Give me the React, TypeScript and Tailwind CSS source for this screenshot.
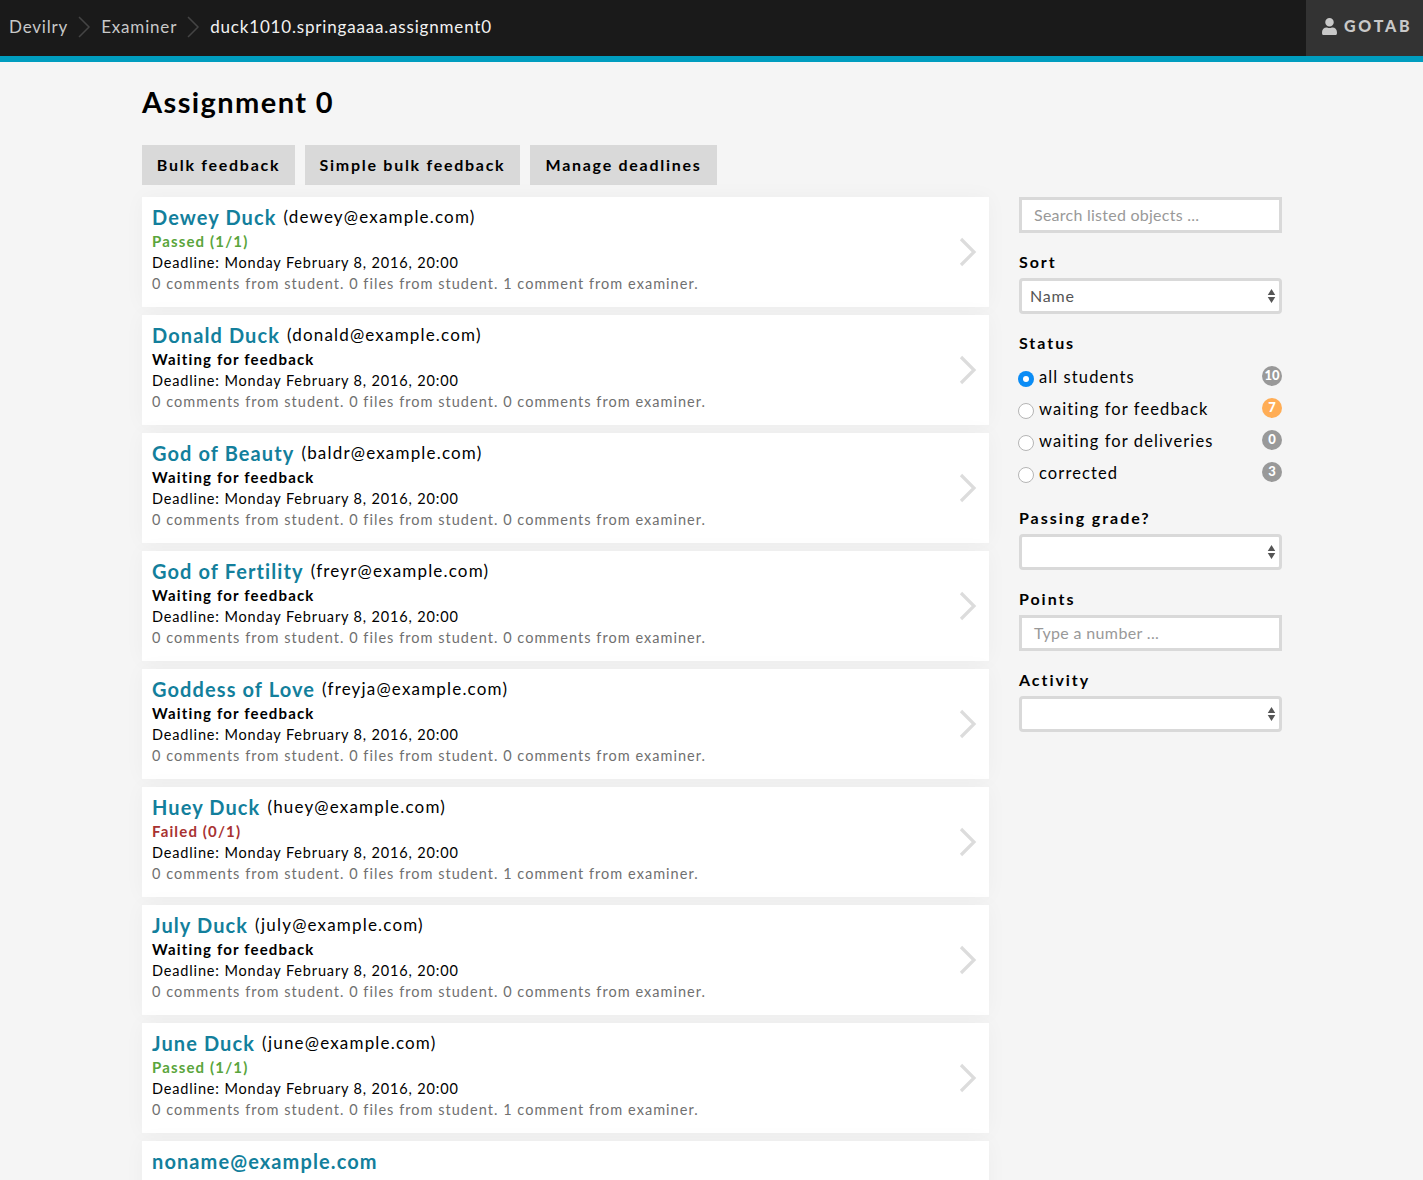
import React from "react";
import { FaUser } from "react-icons/fa";

type Card = { name?: string; email: string; status: string; comments: string };
const Z = "0 comments from student. 0 files from student. 0 comments from examiner.";
const O = "0 comments from student. 0 files from student. 1 comment from examiner.";
const W = "Waiting for feedback";
const cards: Card[] = [
  { name: "Dewey Duck", email: "dewey@example.com", status: "Passed (1/1)", comments: O },
  { name: "Donald Duck", email: "donald@example.com", status: W, comments: Z },
  { name: "God of Beauty", email: "baldr@example.com", status: W, comments: Z },
  { name: "God of Fertility", email: "freyr@example.com", status: W, comments: Z },
  { name: "Goddess of Love", email: "freyja@example.com", status: W, comments: Z },
  { name: "Huey Duck", email: "huey@example.com", status: "Failed (0/1)", comments: O },
  { name: "July Duck", email: "july@example.com", status: W, comments: Z },
  { name: "June Duck", email: "june@example.com", status: "Passed (1/1)", comments: O },
  { email: "noname@example.com", status: W, comments: Z },
];

function statusClass(s: string) {
  if (s.startsWith("Passed")) return "text-[#5aa53c]";
  if (s.startsWith("Failed")) return "text-[#a83232]";
  return "text-black";
}

function Crumb() {
  return (
    <svg width="14" height="22" viewBox="0 0 14 22" className="mr-[10px] ml-[9px] shrink-0">
      <path d="M2 1l10 10L2 21" fill="none" stroke="#444" strokeWidth="1.5" />
    </svg>
  );
}

function Row({ c }: { c: Card }) {
  return (
    <div className="flex h-[110px] shrink-0 items-start justify-between bg-white pt-[6px] pl-[10px] pr-[12px] shadow-[0_0_20px_rgba(0,0,0,0.035)]">
      <div className="flex flex-col">
        <div className="flex h-[28px] items-center">
          <span className="text-[20px] font-bold tracking-[1.1px] text-[#137f9c]">{c.name ?? c.email}</span>
          {c.name && <span className="ml-[7px] text-[17px] tracking-[1.18px] text-black">({c.email})</span>}
        </div>
        {c.name && (
          <>
            <div className={`h-[21px] text-[15px] leading-[21px] font-bold tracking-[1.15px] ${statusClass(c.status)}`}>{c.status}</div>
            <div className="h-[21px] text-[14.5px] leading-[21px] tracking-[0.85px] text-black">Deadline: Monday February 8, 2016, 20:00</div>
            <div className="h-[21px] text-[14.5px] leading-[21px] tracking-[1.03px] text-[#707070]">{c.comments}</div>
          </>
        )}
      </div>
      <svg width="18" height="30" viewBox="0 0 18 30" className="mt-[34px] shrink-0">
        <path d="M2 2l13 13L2 28" fill="none" stroke="#dcdcdc" strokeWidth="3.2" />
      </svg>
    </div>
  );
}

function SelectBox({ value }: { value?: string }) {
  return (
    <div className="flex h-[36px] items-center justify-between rounded-[4px] border-[3px] border-[#d9d9d9] bg-white pl-[8px] pr-[3px] text-[16px] tracking-[0.8px] text-[#555]">
      <span>{value}</span>
      <svg width="9" height="16" viewBox="0 0 9 16">
        <path d="M4.5 1L8.25 7H.75zM4.5 15L.75 9h7.5z" fill="#555" />
      </svg>
    </div>
  );
}

function Label({ children }: { children: React.ReactNode }) {
  return <div className="h-[22px] text-[16px] leading-[22px] font-bold tracking-[1.95px] text-black">{children}</div>;
}

function Radio({ label, count, active, badge }: { label: string; count: string; active?: boolean; badge: string }) {
  return (
    <div className="flex h-[32px] items-center justify-between">
      <div className="flex items-center">
        {active ? (
          <span className="mt-[3px] -ml-[1px] flex h-[16px] w-[16px] items-center justify-center rounded-full bg-[#0a8cf5]">
            <span className="h-[6px] w-[6px] rounded-full bg-white" />
          </span>
        ) : (
          <span className="mt-[3px] -ml-[1px] h-[16px] w-[16px] rounded-full border border-[#b5b5b5] bg-white" />
        )}
        <span className="ml-[5px] text-[16.5px] tracking-[1.1px] text-black">{label}</span>
      </div>
      <span className={`mb-[2px] flex h-[20px] w-[20px] items-center justify-center overflow-hidden rounded-full text-[13px] font-black text-white ${badge}`}>{count}</span>
    </div>
  );
}

export default function App() {
  return (
    <div className="h-[1180px] overflow-hidden bg-[#f5f5f5] font-['Lato',sans-serif]">
      <header className="flex h-[62px] items-stretch justify-between border-b-[6px] border-[#009dbf] bg-[#1a1a1a]">
        <nav className="flex items-center pb-[2px] pl-[9px] text-[17px] tracking-[0.82px] text-[#c8c8c8]">
          <span>Devilry</span>
          <Crumb />
          <span>Examiner</span>
          <Crumb />
          <span className="text-[#f2f2f2]">duck1010.springaaaa.assignment0</span>
        </nav>
        <div className="flex w-[117px] items-center bg-[#333] pb-[4px] pl-[16px] text-[#c8c8c8]">
          <FaUser size={17} className="-ml-[1px]" />
          <span className="ml-[6px] text-[16px] font-black tracking-[2.75px]">GOTAB</span>
        </div>
      </header>
      <main className="pl-[142px]">
        <h1 className="mb-[4px] flex h-[79px] items-center text-[29px] font-bold tracking-[1.4px] text-black">Assignment 0</h1>
        <div className="flex gap-[10px]">
          {[["Bulk feedback", "w-[153px]"], ["Simple bulk feedback", "w-[215px]"], ["Manage deadlines", "w-[187px]"]].map(([t, w]) => (
            <div key={t} className={`flex h-[40px] items-center justify-center bg-[#d9d9d9] text-[16px] font-bold tracking-[1.72px] text-black ${w}`}>{t}</div>
          ))}
        </div>
        <div className="mt-[12px] flex items-start gap-[30px]">
          <div className="flex w-[847px] flex-col gap-[8px]">
            {cards.map((c) => <Row key={c.email} c={c} />)}
          </div>
          <aside className="w-[263px]">
            <div className="flex h-[36px] items-center border-[3px] border-[#d9d9d9] bg-white pl-[12px] text-[16px] tracking-[0.25px] text-[#999]">Search listed objects ...</div>
            <div className="mt-[18px] mb-[5px]"><Label>Sort</Label></div>
            <SelectBox value="Name" />
            <div className="mt-[18px] mb-[7px]"><Label>Status</Label></div>
            <Radio label="all students" count="10" active badge="bg-[#999]" />
            <Radio label="waiting for feedback" count="7" badge="bg-[#ffad55]" />
            <Radio label="waiting for deliveries" count="0" badge="bg-[#999]" />
            <Radio label="corrected" count="3" badge="bg-[#999]" />
            <div className="mt-[18px] mb-[5px]"><Label>Passing grade?</Label></div>
            <SelectBox />
            <div className="mt-[18px] mb-[5px]"><Label>Points</Label></div>
            <div className="flex h-[36px] items-center border-[3px] border-[#d9d9d9] bg-white pl-[12px] text-[16px] tracking-[0.35px] text-[#999]">Type a number ...</div>
            <div className="mt-[18px] mb-[5px]"><Label>Activity</Label></div>
            <SelectBox />
          </aside>
        </div>
      </main>
    </div>
  );
}
